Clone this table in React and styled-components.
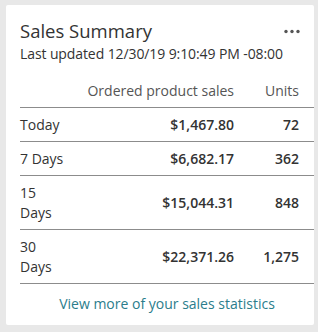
import React from "react";
import styled, { createGlobalStyle } from "styled-components";

const Global = createGlobalStyle`
  html, body { margin: 0; padding: 0; background: #e8e8e8; }
  body { font-family: "Open Sans", "Noto Sans", sans-serif; color: #333; }
`;

const Page = styled.div`
  padding: 5px 4px 7px 6px;
`;

const Card = styled.section`
  width: 308px;
  box-sizing: border-box;
  background: #fff;
  border-radius: 2px;
  padding: 13px 0 11px 14px;
`;

const HeaderRow = styled.div`
  display: flex;
  align-items: center;
  justify-content: space-between;
  padding-right: 14px;
`;

const Title = styled.h2`
  margin: 0;
  font-size: 18.5px;
  line-height: 26px;
  font-weight: 400;
  color: #333;
`;

const MoreButton = styled.button`
  border: 0;
  background: none;
  padding: 0;
  display: flex;
  align-items: center;
  cursor: pointer;
`;

const Subtitle = styled.div`
  font-size: 14px;
  line-height: 20px;
  color: #333;
  letter-spacing: -0.1px;
`;

const Grid = styled.div`
  margin-top: 10px;
  display: grid;
  grid-template-columns: 48px 1fr 80px;
  font-size: 14px;
  line-height: 20px;
`;

const Cell = styled.div`
  padding: 7px 0 6px;
  border-bottom: 1px solid #8c8c8c;
  padding-right: ${(p) => (p.$last ? "15px" : "0")};
  font-weight: ${(p) => (p.$bold ? 600 : 400)};
  color: ${(p) => (p.$head ? "#555" : "#333")};
  display: flex;
  align-items: center;
  justify-content: ${(p) => (p.$align === "right" ? "flex-end" : "flex-start")};
  text-align: ${(p) => p.$align || "left"};
`;

const LinkRow = styled.div`
  text-align: center;
  padding: 10px 0 0;
  font-size: 14px;
  line-height: 20px;
`;

const Link = styled.a`
  color: #2b7d8c;
  text-decoration: none;
`;

const rows = [
  ["Today", "$1,467.80", "72"],
  ["7 Days", "$6,682.17", "362"],
  ["15 Days", "$15,044.31", "848"],
  ["30 Days", "$22,371.26", "1,275"],
];

export default function App() {
  return (
    <Page>
      <Global />
      <Card>
        <HeaderRow>
          <Title>Sales Summary</Title>
          <MoreButton aria-label="More">
            <svg width="16" height="5" viewBox="0 0 16 5">
              <circle cx="2" cy="2.5" r="1.7" fill="#555" />
              <circle cx="8" cy="2.5" r="1.7" fill="#555" />
              <circle cx="14" cy="2.5" r="1.7" fill="#555" />
            </svg>
          </MoreButton>
        </HeaderRow>
        <Subtitle>Last updated 12/30/19 9:10:49 PM -08:00</Subtitle>
        <Grid>
          <Cell $head />
          <Cell $head $align="right">Ordered product sales</Cell>
          <Cell $head $align="right" $last>Units</Cell>
          {rows.map(([l, a, u]) => (
            <React.Fragment key={l}>
              <Cell>{l}</Cell>
              <Cell $align="right" $bold>{a}</Cell>
              <Cell $align="right" $bold $last>{u}</Cell>
            </React.Fragment>
          ))}
        </Grid>
        <LinkRow>
          <Link href="#">View more of your sales statistics</Link>
        </LinkRow>
      </Card>
    </Page>
  );
}
